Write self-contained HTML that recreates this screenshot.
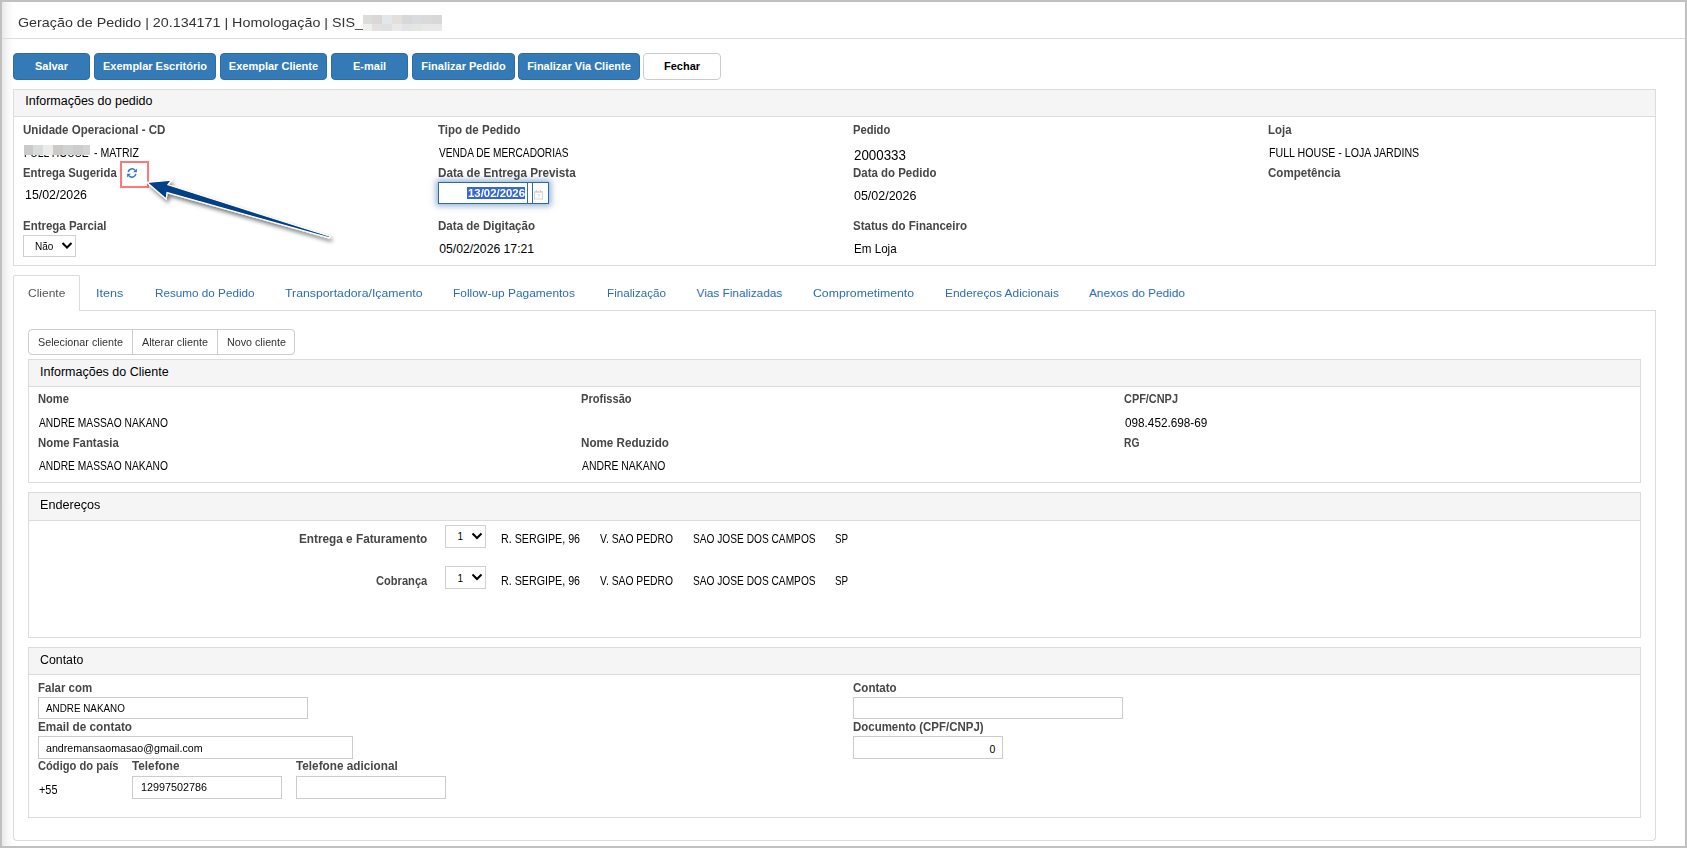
<!DOCTYPE html>
<html><head><meta charset="utf-8"><title>Geração de Pedido</title>
<style>
html,body{margin:0;padding:0;width:1687px;height:848px;overflow:hidden;background:#fff;}
body{position:relative;font-family:"Liberation Sans",sans-serif;}
.t{position:absolute;white-space:nowrap;font-family:"Liberation Sans",sans-serif;}
.b{position:absolute;box-sizing:content-box;}
</style></head><body>
<div class="b" style="left:0px;top:0px;width:1687px;height:848px;background:#fff;"></div>
<div class="b" style="left:2px;top:2px;width:12px;height:844px;background:linear-gradient(to right,#e9e9e9,#f7f7f7 50%,#fff);"></div>
<div class="t" style="left:17.7px;top:16.00px;font-size:13px;line-height:13px;color:#333;transform:scaleX(1.0999);transform-origin:0 0;">Geração de Pedido | 20.134171 | Homologação | SIS_</div>
<div class="b" style="left:363px;top:15px;width:9px;height:9px;background:#dcdcd8;"></div>
<div class="b" style="left:363px;top:24px;width:9px;height:7px;background:#eef0ee;"></div>
<div class="b" style="left:372px;top:15px;width:10px;height:9px;background:#dbd6d7;"></div>
<div class="b" style="left:372px;top:24px;width:10px;height:7px;background:#e4e0e0;"></div>
<div class="b" style="left:382px;top:15px;width:10px;height:9px;background:#e3e7ec;"></div>
<div class="b" style="left:382px;top:24px;width:10px;height:7px;background:#dfe0e2;"></div>
<div class="b" style="left:392px;top:15px;width:10px;height:9px;background:#e2dfdc;"></div>
<div class="b" style="left:392px;top:24px;width:10px;height:7px;background:#ebe9e7;"></div>
<div class="b" style="left:402px;top:15px;width:10px;height:9px;background:#d7d8da;"></div>
<div class="b" style="left:402px;top:24px;width:10px;height:7px;background:#e2e3e4;"></div>
<div class="b" style="left:412px;top:15px;width:10px;height:9px;background:#d8dcdf;"></div>
<div class="b" style="left:412px;top:24px;width:10px;height:7px;background:#e4e6e4;"></div>
<div class="b" style="left:422px;top:15px;width:10px;height:9px;background:#dadada;"></div>
<div class="b" style="left:422px;top:24px;width:10px;height:7px;background:#e8e8e8;"></div>
<div class="b" style="left:432px;top:15px;width:10px;height:9px;background:#d8d8d8;"></div>
<div class="b" style="left:432px;top:24px;width:10px;height:7px;background:#e8e8e8;"></div>
<div class="b" style="left:2px;top:38px;width:1683px;height:1px;background:#dcdcdc;"></div>
<div class="b" style="left:13px;top:53px;width:75px;height:25px;background:#337ab7;border:1px solid #2e6da4;border-radius:4px;"></div>
<div class="t" style="left:13px;top:53px;width:77px;height:27px;line-height:27px;text-align:center;font-size:11px;font-weight:bold;color:#fff;">Salvar</div>
<div class="b" style="left:94px;top:53px;width:120px;height:25px;background:#337ab7;border:1px solid #2e6da4;border-radius:4px;"></div>
<div class="t" style="left:94px;top:53px;width:122px;height:27px;line-height:27px;text-align:center;font-size:11px;font-weight:bold;color:#fff;">Exemplar Escritório</div>
<div class="b" style="left:220px;top:53px;width:105px;height:25px;background:#337ab7;border:1px solid #2e6da4;border-radius:4px;"></div>
<div class="t" style="left:220px;top:53px;width:107px;height:27px;line-height:27px;text-align:center;font-size:11px;font-weight:bold;color:#fff;">Exemplar Cliente</div>
<div class="b" style="left:331px;top:53px;width:75px;height:25px;background:#337ab7;border:1px solid #2e6da4;border-radius:4px;"></div>
<div class="t" style="left:331px;top:53px;width:77px;height:27px;line-height:27px;text-align:center;font-size:11px;font-weight:bold;color:#fff;">E-mail</div>
<div class="b" style="left:412px;top:53px;width:101px;height:25px;background:#337ab7;border:1px solid #2e6da4;border-radius:4px;"></div>
<div class="t" style="left:412px;top:53px;width:103px;height:27px;line-height:27px;text-align:center;font-size:11px;font-weight:bold;color:#fff;">Finalizar Pedido</div>
<div class="b" style="left:518px;top:53px;width:120px;height:25px;background:#337ab7;border:1px solid #2e6da4;border-radius:4px;"></div>
<div class="t" style="left:518px;top:53px;width:122px;height:27px;line-height:27px;text-align:center;font-size:11px;font-weight:bold;color:#fff;">Finalizar Via Cliente</div>
<div class="b" style="left:643px;top:53px;width:76px;height:25px;background:#fff;border:1px solid #ccc;border-radius:4px;"></div>
<div class="t" style="left:643px;top:53px;width:78px;height:27px;line-height:27px;text-align:center;font-size:11px;font-weight:bold;color:#000;">Fechar</div>
<div class="b" style="left:13px;top:89px;width:1641px;height:175px;border:1px solid #dcdcdc;"></div>
<div class="b" style="left:14px;top:90px;width:1641px;height:26px;background:#f5f5f5;border-bottom:1px solid #dcdcdc;"></div>
<div class="t" style="left:25.3px;top:95.00px;font-size:12.5px;line-height:12.5px;color:#000;">Informações do pedido</div>
<div class="t" style="left:23.4px;top:124.00px;font-size:12.2px;line-height:12.2px;color:#474747;font-weight:bold;transform:scaleX(0.9470);transform-origin:0 0;">Unidade Operacional - CD</div>
<div class="t" style="left:438.1px;top:124.00px;font-size:12.2px;line-height:12.2px;color:#474747;font-weight:bold;transform:scaleX(0.9461);transform-origin:0 0;">Tipo de Pedido</div>
<div class="t" style="left:852.7px;top:124.00px;font-size:12.2px;line-height:12.2px;color:#474747;font-weight:bold;transform:scaleX(0.9172);transform-origin:0 0;">Pedido</div>
<div class="t" style="left:1267.6px;top:124.00px;font-size:12.2px;line-height:12.2px;color:#474747;font-weight:bold;transform:scaleX(0.9371);transform-origin:0 0;">Loja</div>
<div class="b" style="left:20px;top:155px;width:75px;height:2px;overflow:hidden;"><div class="t" style="left:4px;top:-8px;font-size:12.2px;line-height:12.2px;color:#000;transform:scaleX(0.85);transform-origin:0 0;">FULL HOUSE</div></div>
<div class="b" style="left:24px;top:145px;width:9px;height:10px;background:#cacaca;"></div>
<div class="b" style="left:33px;top:145px;width:10px;height:10px;background:#d9dada;"></div>
<div class="b" style="left:43px;top:145px;width:10px;height:10px;background:#ebebeb;"></div>
<div class="b" style="left:53px;top:145px;width:10px;height:10px;background:#cdc9c8;"></div>
<div class="b" style="left:63px;top:145px;width:10px;height:10px;background:#d0d3d4;"></div>
<div class="b" style="left:73px;top:145px;width:10px;height:10px;background:#cdcdcd;"></div>
<div class="b" style="left:83px;top:145px;width:7px;height:10px;background:#d4d4d4;"></div>
<div class="t" style="left:93.8px;top:147.00px;font-size:12.2px;line-height:12.2px;color:#000;transform:scaleX(0.8662);transform-origin:0 0;">- MATRIZ</div>
<div class="t" style="left:439.2px;top:147.00px;font-size:12.2px;line-height:12.2px;color:#000;transform:scaleX(0.8312);transform-origin:0 0;">VENDA DE MERCADORIAS</div>
<div class="t" style="left:853.5px;top:148.00px;font-size:14.2px;line-height:14.2px;color:#000;transform:scaleX(0.9407);transform-origin:0 0;">2000333</div>
<div class="t" style="left:1268.6px;top:147.00px;font-size:12.2px;line-height:12.2px;color:#000;transform:scaleX(0.8717);transform-origin:0 0;">FULL HOUSE - LOJA JARDINS</div>
<div class="t" style="left:23.4px;top:167.00px;font-size:12.2px;line-height:12.2px;color:#474747;font-weight:bold;transform:scaleX(0.9286);transform-origin:0 0;">Entrega Sugerida</div>
<div class="t" style="left:438.1px;top:167.00px;font-size:12.2px;line-height:12.2px;color:#474747;font-weight:bold;transform:scaleX(0.9594);transform-origin:0 0;">Data de Entrega Prevista</div>
<div class="t" style="left:852.7px;top:167.00px;font-size:12.2px;line-height:12.2px;color:#474747;font-weight:bold;transform:scaleX(0.9404);transform-origin:0 0;">Data do Pedido</div>
<div class="t" style="left:1267.6px;top:167.00px;font-size:12.2px;line-height:12.2px;color:#474747;font-weight:bold;transform:scaleX(0.9477);transform-origin:0 0;">Competência</div>
<div class="t" style="left:24.5px;top:189.00px;font-size:12.2px;line-height:12.2px;color:#000;transform:scaleX(1.0155);transform-origin:0 0;">15/02/2026</div>
<div class="t" style="left:853.5px;top:190.00px;font-size:12.2px;line-height:12.2px;color:#000;transform:scaleX(1.0221);transform-origin:0 0;">05/02/2026</div>
<div class="t" style="left:23.4px;top:220.00px;font-size:12.2px;line-height:12.2px;color:#474747;font-weight:bold;transform:scaleX(0.9412);transform-origin:0 0;">Entrega Parcial</div>
<div class="t" style="left:438.1px;top:220.00px;font-size:12.2px;line-height:12.2px;color:#474747;font-weight:bold;transform:scaleX(0.9486);transform-origin:0 0;">Data de Digitação</div>
<div class="t" style="left:852.7px;top:220.00px;font-size:12.2px;line-height:12.2px;color:#474747;font-weight:bold;transform:scaleX(0.9457);transform-origin:0 0;">Status do Financeiro</div>
<div class="t" style="left:439.2px;top:243.00px;font-size:12.2px;line-height:12.2px;color:#000;">05/02/2026 17:21</div>
<div class="t" style="left:853.5px;top:243.00px;font-size:12.2px;line-height:12.2px;color:#000;transform:scaleX(0.9541);transform-origin:0 0;">Em Loja</div>
<div class="b" style="left:23px;top:235px;width:51px;height:20px;border:1px solid #d0d0d0;background:#fff;"></div>
<div class="t" style="left:34.5px;top:241.00px;font-size:11px;line-height:11px;color:#000;transform:scaleX(0.9119);transform-origin:0 0;">Não</div>
<svg class="b" style="left:61px;top:241px" width="12" height="9" viewBox="0 0 12 9"><path d="M1.5 2 L6 6.5 L10.5 2" fill="none" stroke="#000" stroke-width="2"/></svg>
<div class="b" style="left:438px;top:182px;width:109px;height:20px;border:1px solid #2d6aa8;background:#fff;box-shadow:0 0 6px 2px rgba(40,100,170,.5);"></div>
<div class="b" style="left:467px;top:187px;width:58px;height:12px;background:#3567d6;"></div>
<div class="t" style="left:467.5px;top:188.00px;font-size:11.5px;line-height:11.5px;color:#fff;font-weight:bold;transform:scaleX(0.9904);transform-origin:0 0;">13/02/2026</div>
<div class="b" style="left:527px;top:183px;width:1px;height:20px;background:#2a6db0;"></div>
<div class="b" style="left:532px;top:183px;width:1px;height:20px;background:#2a6db0;"></div>
<svg class="b" style="left:534px;top:189px" width="10" height="11" viewBox="0 0 10 11"><rect x="0.5" y="2.5" width="8" height="7.5" fill="none" stroke="#d4d4d4" stroke-width="1"/><rect x="0.5" y="2.5" width="8" height="1.5" fill="#dcdcdc"/><rect x="2" y="1" width="1" height="2" fill="#d0d0d0"/><rect x="6" y="1" width="1" height="2" fill="#d0d0d0"/><path d="M3.5 5.5 H5.8 L4.4 8.6" fill="none" stroke="#d8d8d8" stroke-width="0.9"/></svg>
<div class="b" style="left:120px;top:161px;width:25px;height:23px;border:2px solid #f77;"></div>
<svg class="b" style="left:127px;top:168px" width="10" height="10" viewBox="0 0 10 10"><path d="M1.2 4.2 A3.9 3.9 0 0 1 8 2.2" fill="none" stroke="#3078c0" stroke-width="1.45"/><path d="M9.9 0.6 L9.9 4.3 L6.2 4.3 Z" fill="#3078c0"/><path d="M8.8 5.8 A3.9 3.9 0 0 1 2 7.8" fill="none" stroke="#3078c0" stroke-width="1.45"/><path d="M0.1 9.4 L0.1 5.7 L3.8 5.7 Z" fill="#3078c0"/></svg>
<svg class="b" style="left:0;top:0" width="400" height="300" viewBox="0 0 400 300"><defs><filter id="sh" x="-20%" y="-50%" width="140%" height="200%"><feGaussianBlur in="SourceAlpha" stdDeviation="2.2"/><feOffset dx="2" dy="3"/><feComponentTransfer><feFuncA type="linear" slope="0.55"/></feComponentTransfer><feMerge><feMergeNode/><feMergeNode in="SourceGraphic"/></feMerge></filter></defs><path filter="url(#sh)" d="M147.1 182.4 L171.4 180.1 L167.9 184.8 L329.8 236.3 L329.4 237.9 L167 192.6 L166.1 199 Z" fill="#003f87" stroke="#fff" stroke-width="1.2" stroke-linejoin="miter"/></svg>
<div class="b" style="left:13px;top:275px;width:65px;height:35px;border:1px solid #dcdcdc;border-bottom:none;border-radius:2px 2px 0 0;background:#fff;"></div>
<div class="b" style="left:79px;top:310px;width:1577px;height:1px;background:#dcdcdc;"></div>
<div class="t" style="left:27.7px;top:288.00px;font-size:11.8px;line-height:11.8px;color:#555;transform:scaleX(1.0182);transform-origin:0 0;">Cliente</div>
<div class="t" style="left:96.1px;top:288.00px;font-size:11.8px;line-height:11.8px;color:#2c6db3;transform:scaleX(1.0672);transform-origin:0 0;">Itens</div>
<div class="t" style="left:154.7px;top:288.00px;font-size:11.8px;line-height:11.8px;color:#2c6db3;transform:scaleX(0.9924);transform-origin:0 0;">Resumo do Pedido</div>
<div class="t" style="left:285.1px;top:288.00px;font-size:11.8px;line-height:11.8px;color:#2c6db3;transform:scaleX(1.0413);transform-origin:0 0;">Transportadora/Içamento</div>
<div class="t" style="left:453.4px;top:288.00px;font-size:11.8px;line-height:11.8px;color:#2c6db3;transform:scaleX(1.0109);transform-origin:0 0;">Follow-up Pagamentos</div>
<div class="t" style="left:606.5px;top:288.00px;font-size:11.8px;line-height:11.8px;color:#2c6db3;transform:scaleX(0.9902);transform-origin:0 0;">Finalização</div>
<div class="t" style="left:696.5px;top:288.00px;font-size:11.8px;line-height:11.8px;color:#2c6db3;">Vias Finalizadas</div>
<div class="t" style="left:812.6px;top:288.00px;font-size:11.8px;line-height:11.8px;color:#2c6db3;transform:scaleX(1.0417);transform-origin:0 0;">Comprometimento</div>
<div class="t" style="left:944.6px;top:288.00px;font-size:11.8px;line-height:11.8px;color:#2c6db3;transform:scaleX(1.0095);transform-origin:0 0;">Endereços Adicionais</div>
<div class="t" style="left:1089.0px;top:288.00px;font-size:11.8px;line-height:11.8px;color:#2c6db3;">Anexos do Pedido</div>
<div class="b" style="left:13px;top:310px;width:1641px;height:530px;border:1px solid #dcdcdc;border-top:none;border-radius:0 0 4px 4px;"></div>
<div class="b" style="left:28px;top:329px;width:265px;height:24px;border:1px solid #ccc;border-radius:4px;background:#fff;"></div>
<div class="b" style="left:132px;top:330px;width:1px;height:25px;background:#ccc;"></div>
<div class="b" style="left:217px;top:330px;width:1px;height:25px;background:#ccc;"></div>
<div class="t" style="left:37.7px;top:337.00px;font-size:11px;line-height:11px;color:#333;transform:scaleX(0.9790);transform-origin:0 0;">Selecionar cliente</div>
<div class="t" style="left:142.0px;top:337.00px;font-size:11px;line-height:11px;color:#333;transform:scaleX(0.9814);transform-origin:0 0;">Alterar cliente</div>
<div class="t" style="left:227.2px;top:337.00px;font-size:11px;line-height:11px;color:#333;transform:scaleX(0.9747);transform-origin:0 0;">Novo cliente</div>
<div class="b" style="left:28px;top:359px;width:1611px;height:122px;border:1px solid #dcdcdc;"></div>
<div class="b" style="left:29px;top:360px;width:1611px;height:26px;background:#f5f5f5;border-bottom:1px solid #dcdcdc;"></div>
<div class="t" style="left:40.1px;top:366.00px;font-size:12.5px;line-height:12.5px;color:#000;">Informações do Cliente</div>
<div class="t" style="left:38.1px;top:393.00px;font-size:12.2px;line-height:12.2px;color:#474747;font-weight:bold;transform:scaleX(0.9146);transform-origin:0 0;">Nome</div>
<div class="t" style="left:580.7px;top:393.00px;font-size:12.2px;line-height:12.2px;color:#474747;font-weight:bold;transform:scaleX(0.9120);transform-origin:0 0;">Profissão</div>
<div class="t" style="left:1124.3px;top:393.00px;font-size:12.2px;line-height:12.2px;color:#474747;font-weight:bold;transform:scaleX(0.8950);transform-origin:0 0;">CPF/CNPJ</div>
<div class="t" style="left:38.9px;top:417.00px;font-size:12.2px;line-height:12.2px;color:#000;transform:scaleX(0.8420);transform-origin:0 0;">ANDRE MASSAO NAKANO</div>
<div class="t" style="left:1124.9px;top:417.00px;font-size:12.2px;line-height:12.2px;color:#000;transform:scaleX(0.9641);transform-origin:0 0;">098.452.698-69</div>
<div class="t" style="left:38.1px;top:437.00px;font-size:12.2px;line-height:12.2px;color:#474747;font-weight:bold;transform:scaleX(0.9311);transform-origin:0 0;">Nome Fantasia</div>
<div class="t" style="left:580.7px;top:437.00px;font-size:12.2px;line-height:12.2px;color:#474747;font-weight:bold;transform:scaleX(0.9547);transform-origin:0 0;">Nome Reduzido</div>
<div class="t" style="left:1124.3px;top:437.00px;font-size:12.2px;line-height:12.2px;color:#474747;font-weight:bold;transform:scaleX(0.8415);transform-origin:0 0;">RG</div>
<div class="t" style="left:38.9px;top:460.00px;font-size:12.2px;line-height:12.2px;color:#000;transform:scaleX(0.8420);transform-origin:0 0;">ANDRE MASSAO NAKANO</div>
<div class="t" style="left:581.6px;top:460.00px;font-size:12.2px;line-height:12.2px;color:#000;transform:scaleX(0.8543);transform-origin:0 0;">ANDRE NAKANO</div>
<div class="b" style="left:28px;top:492px;width:1611px;height:144px;border:1px solid #dcdcdc;"></div>
<div class="b" style="left:29px;top:493px;width:1611px;height:27px;background:#f5f5f5;border-bottom:1px solid #dcdcdc;"></div>
<div class="t" style="left:40.1px;top:499.00px;font-size:12.5px;line-height:12.5px;color:#000;transform:scaleX(1.0107);transform-origin:0 0;">Endereços</div>
<div class="t" style="left:298.5px;top:533.00px;font-size:12.2px;line-height:12.2px;color:#474747;font-weight:bold;transform:scaleX(0.9664);transform-origin:0 0;">Entrega e Faturamento</div>
<div class="t" style="left:375.6px;top:575.00px;font-size:12.2px;line-height:12.2px;color:#474747;font-weight:bold;transform:scaleX(0.9117);transform-origin:0 0;">Cobrança</div>
<div class="b" style="left:445px;top:525px;width:39px;height:21px;border:1px solid #d0d0d0;background:#fff;"></div>
<div class="t" style="left:457.4px;top:532.00px;font-size:10px;line-height:10px;color:#000;">1</div>
<svg class="b" style="left:471px;top:532px" width="12" height="8" viewBox="0 0 12 8"><path d="M1.5 1.5 L6 6 L10.5 1.5" fill="none" stroke="#000" stroke-width="2"/></svg>
<div class="t" style="left:501.0px;top:533.00px;font-size:12.2px;line-height:12.2px;color:#000;transform:scaleX(0.8772);transform-origin:0 0;">R. SERGIPE, 96</div>
<div class="t" style="left:600.0px;top:533.00px;font-size:12.2px;line-height:12.2px;color:#000;transform:scaleX(0.8467);transform-origin:0 0;">V. SAO PEDRO</div>
<div class="t" style="left:692.7px;top:533.00px;font-size:12.2px;line-height:12.2px;color:#000;transform:scaleX(0.8341);transform-origin:0 0;">SAO JOSE DOS CAMPOS</div>
<div class="t" style="left:834.5px;top:533.00px;font-size:12.2px;line-height:12.2px;color:#000;transform:scaleX(0.8049);transform-origin:0 0;">SP</div>
<div class="b" style="left:445px;top:566px;width:39px;height:21px;border:1px solid #d0d0d0;background:#fff;"></div>
<div class="t" style="left:457.4px;top:574.00px;font-size:10px;line-height:10px;color:#000;">1</div>
<svg class="b" style="left:471px;top:573px" width="12" height="8" viewBox="0 0 12 8"><path d="M1.5 1.5 L6 6 L10.5 1.5" fill="none" stroke="#000" stroke-width="2"/></svg>
<div class="t" style="left:501.0px;top:575.00px;font-size:12.2px;line-height:12.2px;color:#000;transform:scaleX(0.8772);transform-origin:0 0;">R. SERGIPE, 96</div>
<div class="t" style="left:600.0px;top:575.00px;font-size:12.2px;line-height:12.2px;color:#000;transform:scaleX(0.8467);transform-origin:0 0;">V. SAO PEDRO</div>
<div class="t" style="left:692.7px;top:575.00px;font-size:12.2px;line-height:12.2px;color:#000;transform:scaleX(0.8341);transform-origin:0 0;">SAO JOSE DOS CAMPOS</div>
<div class="t" style="left:834.5px;top:575.00px;font-size:12.2px;line-height:12.2px;color:#000;transform:scaleX(0.8049);transform-origin:0 0;">SP</div>
<div class="b" style="left:28px;top:647px;width:1611px;height:169px;border:1px solid #dcdcdc;"></div>
<div class="b" style="left:29px;top:648px;width:1611px;height:26px;background:#f5f5f5;border-bottom:1px solid #dcdcdc;"></div>
<div class="t" style="left:40.1px;top:654.00px;font-size:12.5px;line-height:12.5px;color:#000;transform:scaleX(0.9890);transform-origin:0 0;">Contato</div>
<div class="t" style="left:37.7px;top:682.00px;font-size:12.2px;line-height:12.2px;color:#474747;font-weight:bold;transform:scaleX(0.9405);transform-origin:0 0;">Falar com</div>
<div class="t" style="left:852.6px;top:682.00px;font-size:12.2px;line-height:12.2px;color:#474747;font-weight:bold;transform:scaleX(0.9485);transform-origin:0 0;">Contato</div>
<div class="b" style="left:38px;top:697px;width:268px;height:20px;border:1px solid #ccc;background:#fff;"></div>
<div class="b" style="left:853px;top:697px;width:268px;height:20px;border:1px solid #ccc;background:#fff;"></div>
<div class="t" style="left:46.1px;top:704.00px;font-size:10.0px;line-height:10.0px;color:#000;transform:scaleX(0.9848);transform-origin:0 0;">ANDRE NAKANO</div>
<div class="t" style="left:37.7px;top:721.00px;font-size:12.2px;line-height:12.2px;color:#474747;font-weight:bold;transform:scaleX(0.9640);transform-origin:0 0;">Email de contato</div>
<div class="t" style="left:852.6px;top:721.00px;font-size:12.2px;line-height:12.2px;color:#474747;font-weight:bold;transform:scaleX(0.9407);transform-origin:0 0;">Documento (CPF/CNPJ)</div>
<div class="b" style="left:38px;top:736px;width:313px;height:21px;border:1px solid #ccc;background:#fff;"></div>
<div class="b" style="left:853px;top:736px;width:148px;height:21px;border:1px solid #ccc;background:#fff;"></div>
<div class="t" style="left:46.1px;top:744.00px;font-size:10.0px;line-height:10.0px;color:#000;transform:scaleX(1.0655);transform-origin:0 0;">andremansaomasao@gmail.com</div>
<div class="t" style="left:989.5px;top:744.00px;font-size:10.5px;line-height:10.5px;color:#000;">0</div>
<div class="t" style="left:37.7px;top:760.00px;font-size:12.2px;line-height:12.2px;color:#474747;font-weight:bold;transform:scaleX(0.9138);transform-origin:0 0;">Código do país</div>
<div class="t" style="left:132.4px;top:760.00px;font-size:12.2px;line-height:12.2px;color:#474747;font-weight:bold;transform:scaleX(0.9644);transform-origin:0 0;">Telefone</div>
<div class="t" style="left:296.0px;top:760.00px;font-size:12.2px;line-height:12.2px;color:#474747;font-weight:bold;transform:scaleX(0.9648);transform-origin:0 0;">Telefone adicional</div>
<div class="t" style="left:38.5px;top:784.00px;font-size:12.2px;line-height:12.2px;color:#000;transform:scaleX(0.8940);transform-origin:0 0;">+55</div>
<div class="b" style="left:132px;top:776px;width:148px;height:21px;border:1px solid #ccc;background:#fff;"></div>
<div class="b" style="left:296px;top:776px;width:148px;height:21px;border:1px solid #ccc;background:#fff;"></div>
<div class="t" style="left:140.9px;top:783.00px;font-size:10.0px;line-height:10.0px;color:#000;transform:scaleX(1.0790);transform-origin:0 0;">12997502786</div>
<div class="b" style="left:0px;top:0px;width:1687px;height:2px;background:#c0c0c0;"></div>
<div class="b" style="left:0px;top:846px;width:1687px;height:2px;background:#c0c0c0;"></div>
<div class="b" style="left:0px;top:0px;width:2px;height:848px;background:#c0c0c0;"></div>
<div class="b" style="left:1685px;top:0px;width:2px;height:848px;background:#c0c0c0;"></div>
</body></html>
